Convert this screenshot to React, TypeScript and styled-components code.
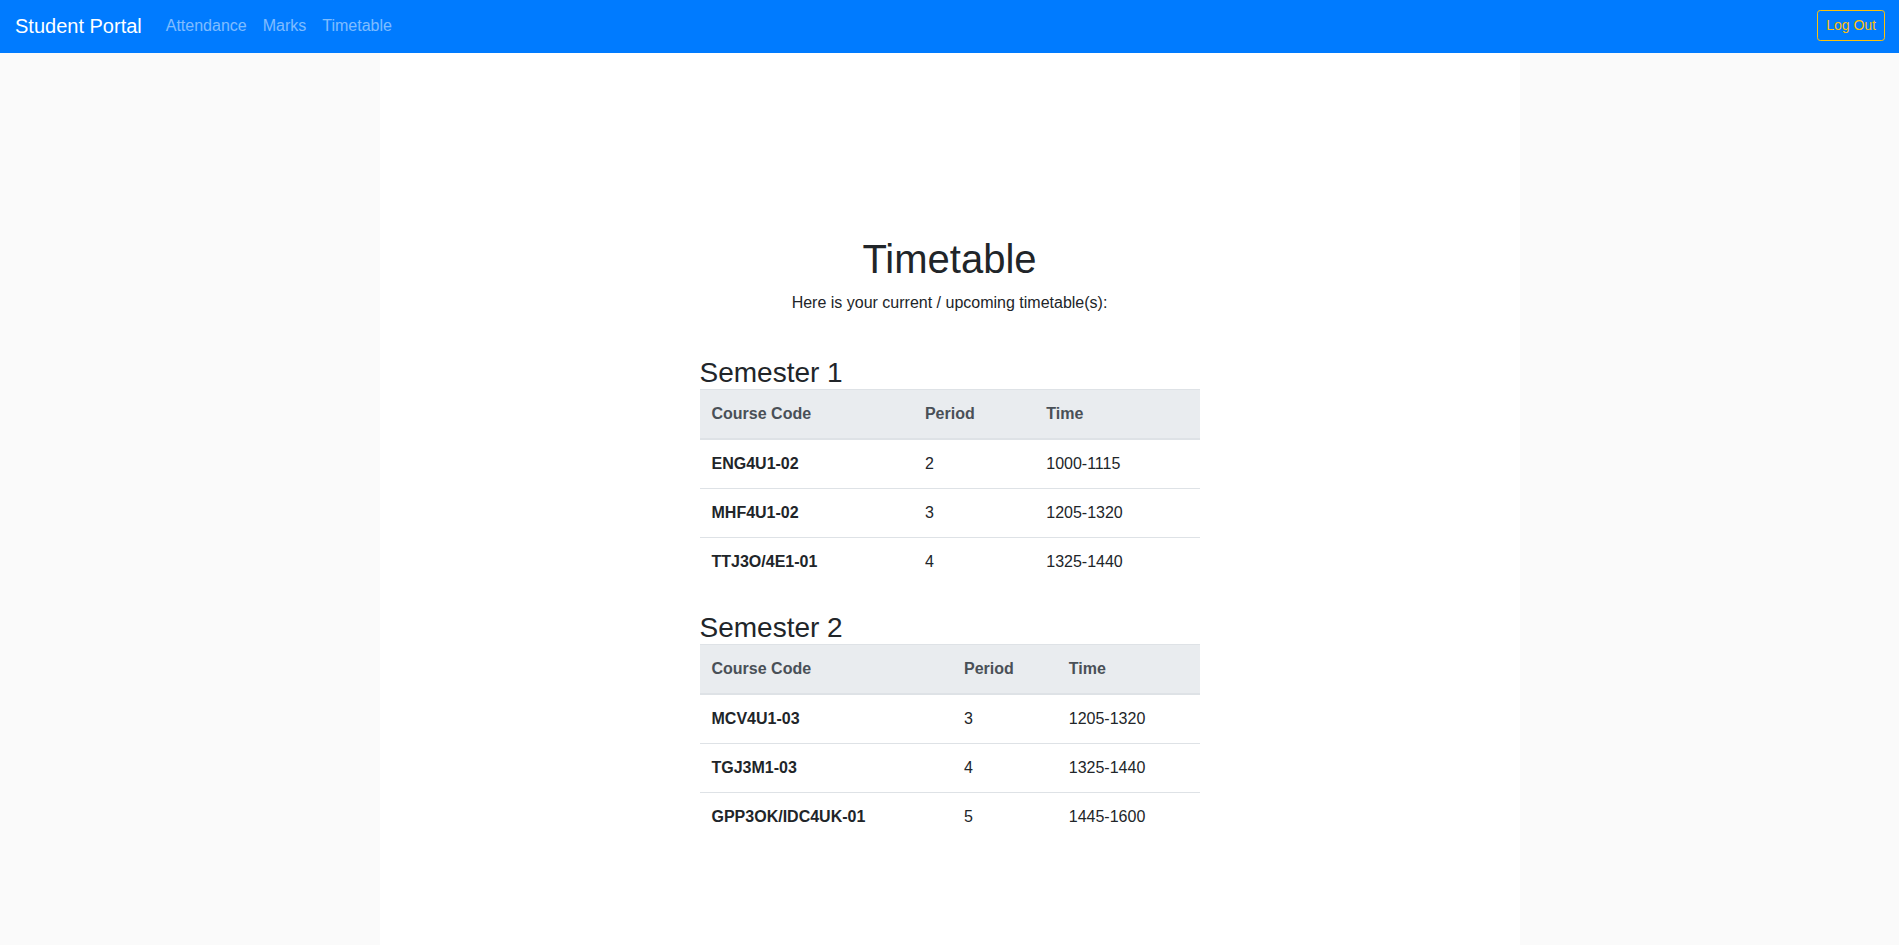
import React from "react";
import styled, { createGlobalStyle } from "styled-components";

const GlobalStyle = createGlobalStyle`
  html, body {
    margin: 0;
    padding: 0;
  }
  body {
    font-family: "Liberation Sans", Arial, Helvetica, sans-serif;
    font-size: 16px;
    line-height: 1.5;
    color: #212529;
    background: #fafafa;
  }
  * { box-sizing: border-box; }
`;

const Navbar = styled.nav`
  display: flex;
  align-items: center;
  height: 53px;
  padding: 0 14px 2px 15px;
  background: #007bff;
`;

const Brand = styled.a`
  font-size: 20px;
  line-height: 30px;
  color: #fff;
  text-decoration: none;
  margin-right: 16px;
  white-space: nowrap;
`;

const NavLinks = styled.ul`
  display: flex;
  list-style: none;
  margin: 0;
  padding: 0;
  flex: 1;
`;

const NavLink = styled.a`
  display: block;
  padding: 0 8px;
  font-size: 16px;
  line-height: 24px;
  color: rgba(255, 255, 255, 0.5);
  text-decoration: none;
`;

const LogOutButton = styled.button`
  font-family: inherit;
  font-size: 14px;
  line-height: 21px;
  padding: 4px 8px;
  color: #ffc107;
  background: transparent;
  border: 1px solid #ffc107;
  border-radius: 3.2px;
  cursor: pointer;
`;

const Main = styled.main`
  width: 1140px;
  margin: 0 auto;
  background: #fff;
  min-height: calc(100vh - 53px);
  padding: 182px 15px 40px;
`;

const Title = styled.h1`
  margin: 0 0 8px;
  font-size: 40px;
  line-height: 1.2;
  font-weight: 500;
  text-align: center;
`;

const Lead = styled.p`
  margin: 0 0 32px;
  text-align: center;
`;

const Schedule = styled.div`
  display: flex;
  flex-direction: column;
  width: 500px;
  margin: 0 auto;
`;

const Semester = styled.section`
  display: flow-root;
`;

const SemesterTitle = styled.h3`
  margin: 11px 0 0;
  font-size: 28px;
  line-height: 1.1;
  font-weight: 500;
`;

const Table = styled.table`
  width: 100%;
  border-collapse: collapse;
  margin-bottom: 16px;
  color: #212529;
`;

const HeadCell = styled.th`
  text-align: left;
  padding: 12px;
  font-weight: 700;
  color: #495057;
  background: #e9ecef;
  border-top: 1px solid #dee2e6;
  border-bottom: 2px solid #dee2e6;
`;

const Cell = styled.td<{ $bold?: boolean }>`
  text-align: left;
  padding: 12px;
  border-top: 1px solid #dee2e6;
  font-weight: ${(p) => (p.$bold ? 700 : 400)};
`;

type Row = { code: string; period: string; time: string };

const semesters: { name: string; rows: Row[] }[] = [
  {
    name: "Semester 1",
    rows: [
      { code: "ENG4U1-02", period: "2", time: "1000-1115" },
      { code: "MHF4U1-02", period: "3", time: "1205-1320" },
      { code: "TTJ3O/4E1-01", period: "4", time: "1325-1440" },
    ],
  },
  {
    name: "Semester 2",
    rows: [
      { code: "MCV4U1-03", period: "3", time: "1205-1320" },
      { code: "TGJ3M1-03", period: "4", time: "1325-1440" },
      { code: "GPP3OK/IDC4UK-01", period: "5", time: "1445-1600" },
    ],
  },
];

export default function App() {
  return (
    <>
      <GlobalStyle />
      <Navbar>
        <Brand href="#">Student Portal</Brand>
        <NavLinks>
          <li><NavLink href="#">Attendance</NavLink></li>
          <li><NavLink href="#">Marks</NavLink></li>
          <li><NavLink href="#">Timetable</NavLink></li>
        </NavLinks>
        <LogOutButton>Log Out</LogOutButton>
      </Navbar>
      <Main>
        <Title>Timetable</Title>
        <Lead>Here is your current / upcoming timetable(s):</Lead>
        <Schedule>
          {semesters.map((s) => (
            <Semester key={s.name}>
              <SemesterTitle>{s.name}</SemesterTitle>
              <Table>
                <thead>
                  <tr>
                    <HeadCell>Course Code</HeadCell>
                    <HeadCell>Period</HeadCell>
                    <HeadCell>Time</HeadCell>
                  </tr>
                </thead>
                <tbody>
                  {s.rows.map((r) => (
                    <tr key={r.code}>
                      <Cell $bold>{r.code}</Cell>
                      <Cell>{r.period}</Cell>
                      <Cell>{r.time}</Cell>
                    </tr>
                  ))}
                </tbody>
              </Table>
            </Semester>
          ))}
        </Schedule>
      </Main>
    </>
  );
}
